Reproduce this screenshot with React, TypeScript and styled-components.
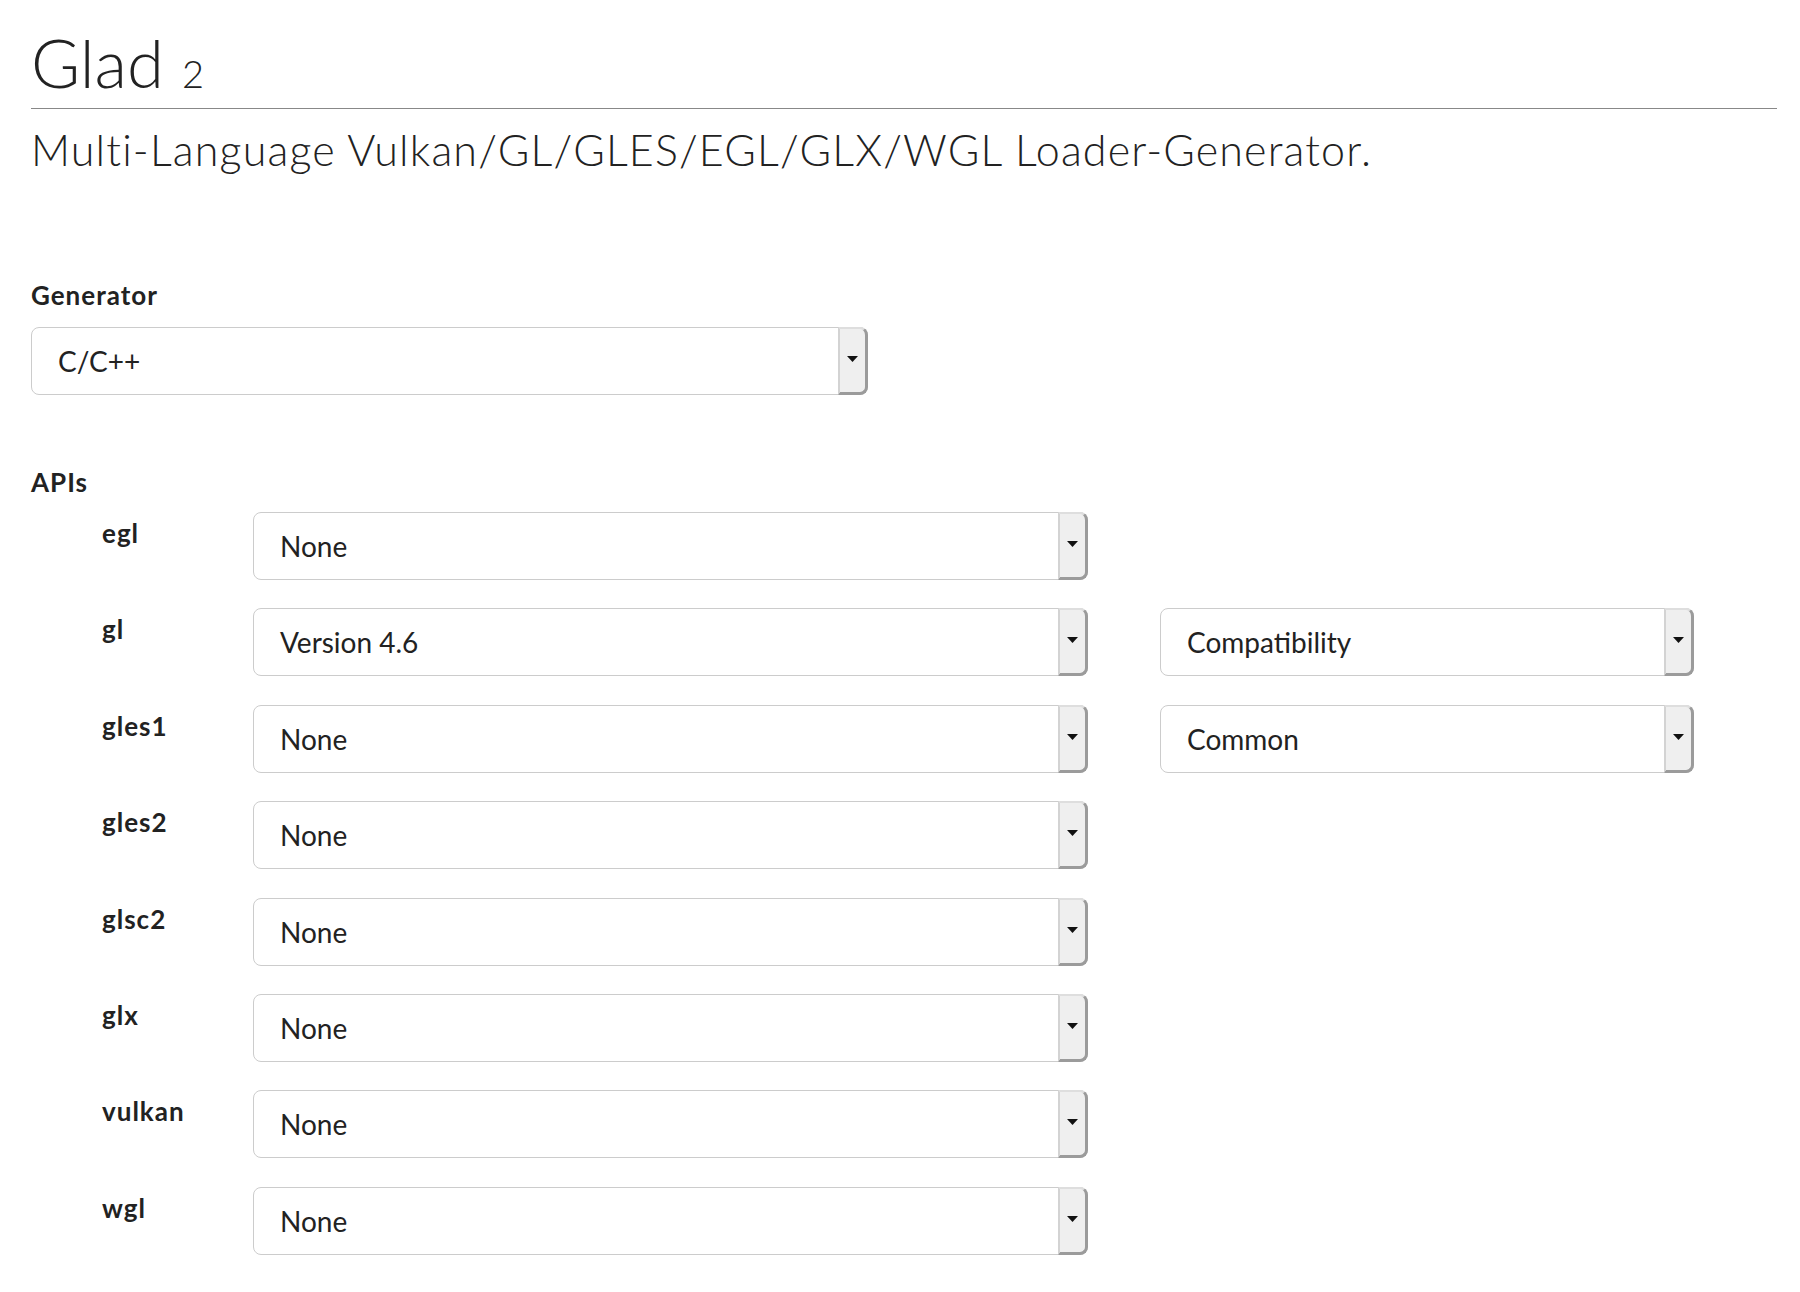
import React from "react";
import styled, { createGlobalStyle } from "styled-components";

const GlobalStyle = createGlobalStyle`
  html, body { margin: 0; padding: 0; background: #ffffff; }
  body {
    font-family: "Lato", "Liberation Sans", sans-serif;
    color: #222222;
    -webkit-font-smoothing: antialiased;
  }
  * { box-sizing: border-box; }
`;

const Page = styled.div`
  padding: 0 23px 40px 31px;
`;

const Title = styled.h1`
  margin: 29px 0 0;
  height: 67px;
  font-size: 67px;
  line-height: 67px;
  font-weight: 300;
  color: #222222;
`;

const TitleVersion = styled.small`
  font-size: 38px;
  line-height: 1;
  font-weight: 300;
`;

const Rule = styled.hr`
  margin: 12px 0 0;
  border: 0;
  border-top: 1px solid #888888;
  height: 0;
`;

const Subtitle = styled.h2`
  margin: 19px 0 0;
  font-size: 43px;
  line-height: 43px;
  font-weight: 300;
  letter-spacing: 1.15px;
  color: #222222;
`;

const FieldLabel = styled.div<{ $top: number }>`
  margin-top: ${(p) => p.$top}px;
  font-size: 26px;
  line-height: 26px;
  font-weight: 700;
  letter-spacing: 1px;
  color: #222222;
`;

const SelectBox = styled.div<{ $width: number; $top?: number }>`
  display: flex;
  align-items: center;
  width: ${(p) => p.$width}px;
  height: 68px;
  margin-top: ${(p) => p.$top ?? 0}px;
  border: 1px solid #cccccc;
  border-radius: 8px;
  background: #ffffff;
`;

const SelectValue = styled.span`
  flex: 1;
  padding-left: 26px;
  font-size: 28px;
  line-height: 28px;
  color: #222222;
  white-space: nowrap;
`;

const SelectArrow = styled.span`
  align-self: stretch;
  width: 30px;
  margin: -1px -1px -1px 0;
  display: flex;
  align-items: center;
  justify-content: center;
  padding-bottom: 3px;
  background: #efefef;
  border-left: 2px solid #d3d3d3;
  border-top: 2px solid #dedede;
  border-right: 3px solid #9b9b9b;
  border-bottom: 3px solid #9b9b9b;
  border-radius: 0 8px 8px 0;
`;

const ApiList = styled.div`
  margin-top: 17px;
  padding-left: 71px;
  display: flex;
  flex-direction: column;
  gap: 28.4px;
`;

const ApiRow = styled.div`
  display: grid;
  grid-template-columns: 151px 835px 72px 534px;
  align-items: start;
`;

const ApiName = styled.div`
  padding-top: 8px;
  font-size: 26px;
  line-height: 26px;
  font-weight: 700;
  letter-spacing: 1px;
  color: #222222;
`;

const Arrow = () => (
  <svg width="11" height="6" viewBox="0 0 11 6" aria-hidden="true">
    <polygon points="0,0 11,0 5.5,6" fill="#111111" />
  </svg>
);

const Select = ({ value, width, top }: { value: string; width: number; top?: number }) => (
  <SelectBox $width={width} $top={top}>
    <SelectValue>{value}</SelectValue>
    <SelectArrow>
      <Arrow />
    </SelectArrow>
  </SelectBox>
);

const apis: { name: string; version: string; profile?: string }[] = [
  { name: "egl", version: "None" },
  { name: "gl", version: "Version 4.6", profile: "Compatibility" },
  { name: "gles1", version: "None", profile: "Common" },
  { name: "gles2", version: "None" },
  { name: "glsc2", version: "None" },
  { name: "glx", version: "None" },
  { name: "vulkan", version: "None" },
  { name: "wgl", version: "None" },
];

export default function App() {
  return (
    <>
      <GlobalStyle />
      <Page>
        <Title>
          Glad <TitleVersion>2</TitleVersion>
        </Title>
        <Rule />
        <Subtitle>Multi-Language Vulkan/GL/GLES/EGL/GLX/WGL Loader-Generator.</Subtitle>

        <FieldLabel $top={111}>Generator</FieldLabel>
        <Select value="C/C++" width={837} top={19} />

        <FieldLabel $top={74}>APIs</FieldLabel>
        <ApiList>
          {apis.map((api) => (
            <ApiRow key={api.name}>
              <ApiName>{api.name}</ApiName>
              <Select value={api.version} width={835} />
              <span />
              {api.profile ? <Select value={api.profile} width={534} /> : <span />}
            </ApiRow>
          ))}
        </ApiList>
      </Page>
    </>
  );
}
